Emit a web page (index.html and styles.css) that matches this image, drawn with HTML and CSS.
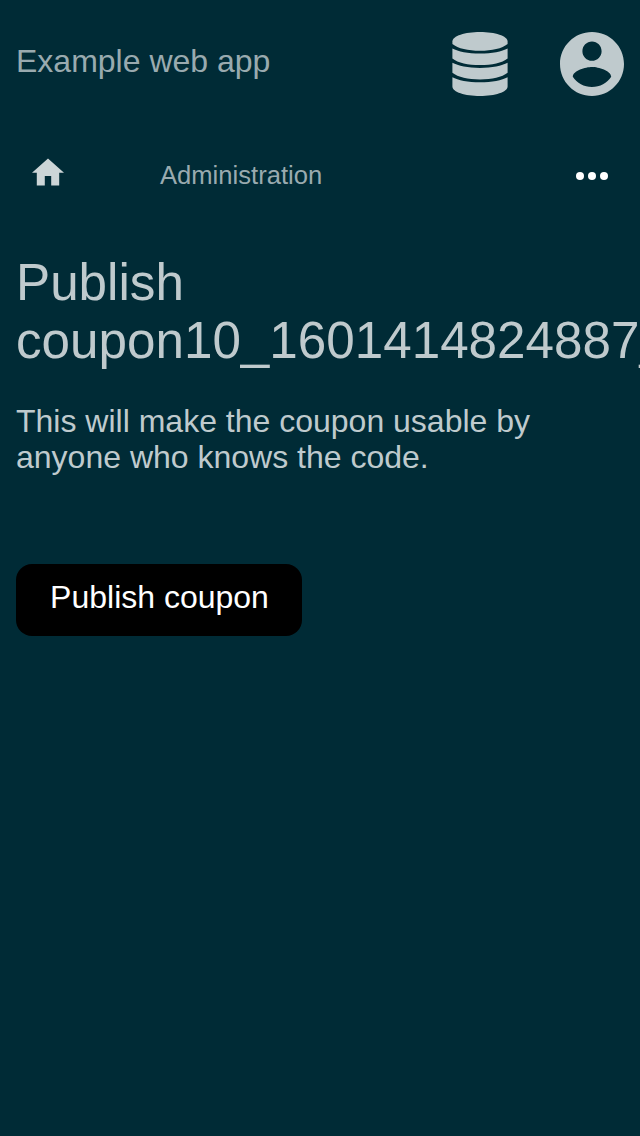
FILE: index.html
```html
<!DOCTYPE html>
<html lang="en">
<head>
<meta charset="utf-8">
<title>Publish coupon</title>
<link rel="stylesheet" href="styles.css">
</head>
<body>
<header class="topbar">
  <a class="brand">Example web app</a>
  <div class="actions">
    <svg class="icon-db" viewBox="0 0 56 64" aria-label="Data">
      <path d="M28 0C13 0 .4 4 .4 9.500V12C6 16.500 16 18.800 28 18.800S50 16.500 55.600 12V9.500C55.600 4 43 0 28 0z"/>
      <path d="M.4 16.500v10C6 31 16 33.100 28 33.100S50 31 55.600 26.500v-10C50 19.500 40 21.600 28 21.600S6 19.500 .4 16.500z"/>
      <path d="M.4 30.800v10C6 45.300 16 47.400 28 47.400s22-2.100 27.600-6.600v-10C50 33.800 40 36 28 36S6 33.800 .4 30.800z"/>
      <path d="M.4 45.300v9.200C.4 60 13 64 28 64s27.600-4 27.600-9.500v-9.200C50 48.300 40 50.300 28 50.300S6 48.300 .4 45.300z"/>
    </svg>
    <svg class="icon-user" viewBox="2 2 20 20" aria-label="Account">
      <path d="M12 2C6.480 2 2 6.480 2 12s4.480 10 10 10 10-4.480 10-10S17.520 2 12 2zm0 3c1.660 0 3 1.340 3 3s-1.340 3-3 3-3-1.340-3-3 1.340-3 3-3zm0 14.200c-2.500 0-4.710-1.280-6-3.220.030-1.990 4-3.080 6-3.080 1.990 0 5.970 1.090 6 3.080-1.290 1.940-3.500 3.220-6 3.220z"/>
    </svg>
  </div>
</header>
<nav class="crumbs">
  <svg class="icon-home" viewBox="2 3 20 17" aria-label="Home"><path d="M10 20v-6h4v6h5v-8h3L12 3 2 12h3v8z"/></svg>
  <a class="crumb">Administration</a>
  <svg class="icon-more" viewBox="0 0 32 8" aria-label="More"><circle cx="4" cy="4" r="4"/><circle cx="16" cy="4" r="4"/><circle cx="28" cy="4" r="4"/></svg>
</nav>
<main class="content">
  <h1 class="title">Publish coupon10_1601414824887_0</h1>
  <p class="description">This will make the coupon usable by anyone who knows the code.</p>
  <button class="publish">Publish coupon</button>
</main>
</body>
</html>
```
FILE: styles.css
```css
body {
  margin: 0;
  min-height: 1136px;
  overflow: hidden;
  background: #002b36;
  color: #bfcacd;
  font-family: "Liberation Sans", Arial, sans-serif;
  font-size: 32px;
}
svg { display: block; fill: #bfcacd; }
.topbar {
  display: flex;
  justify-content: space-between;
  height: 96px;
  padding: 32px 16px 0;
  box-sizing: border-box;
}
.brand { color: #99aaaf; line-height: 58px; }
.actions { display: flex; gap: 52px; }
.icon-db { width: 56px; height: 64px; }
.icon-user { width: 64px; height: 64px; }
.crumbs {
  display: flex;
  height: 32px;
  margin-top: 62px;
  padding: 0 32px;
}
.icon-home { width: 32px; height: 28px; fill: #ccd5d7; }
.crumb {
  margin-left: 96px;
  color: #99aaaf;
  font-size: 25.600px;
  line-height: 34px;
}
.icon-more { width: 32px; height: 8px; margin: 14px 0 0 auto; fill: #fff; }
.content { padding: 64px 16px 0; }
.title { margin: 0; font-size: 51.200px; font-weight: 400; line-height: 58px; }
.description { margin: 33px 0 89px; line-height: 36px; }
.publish {
  width: 286px;
  height: 72px;
  padding: 0 0 5px 1px;
  border: 0;
  border-radius: 16px;
  background: #000;
  color: #fff;
  font: inherit;
}
```
